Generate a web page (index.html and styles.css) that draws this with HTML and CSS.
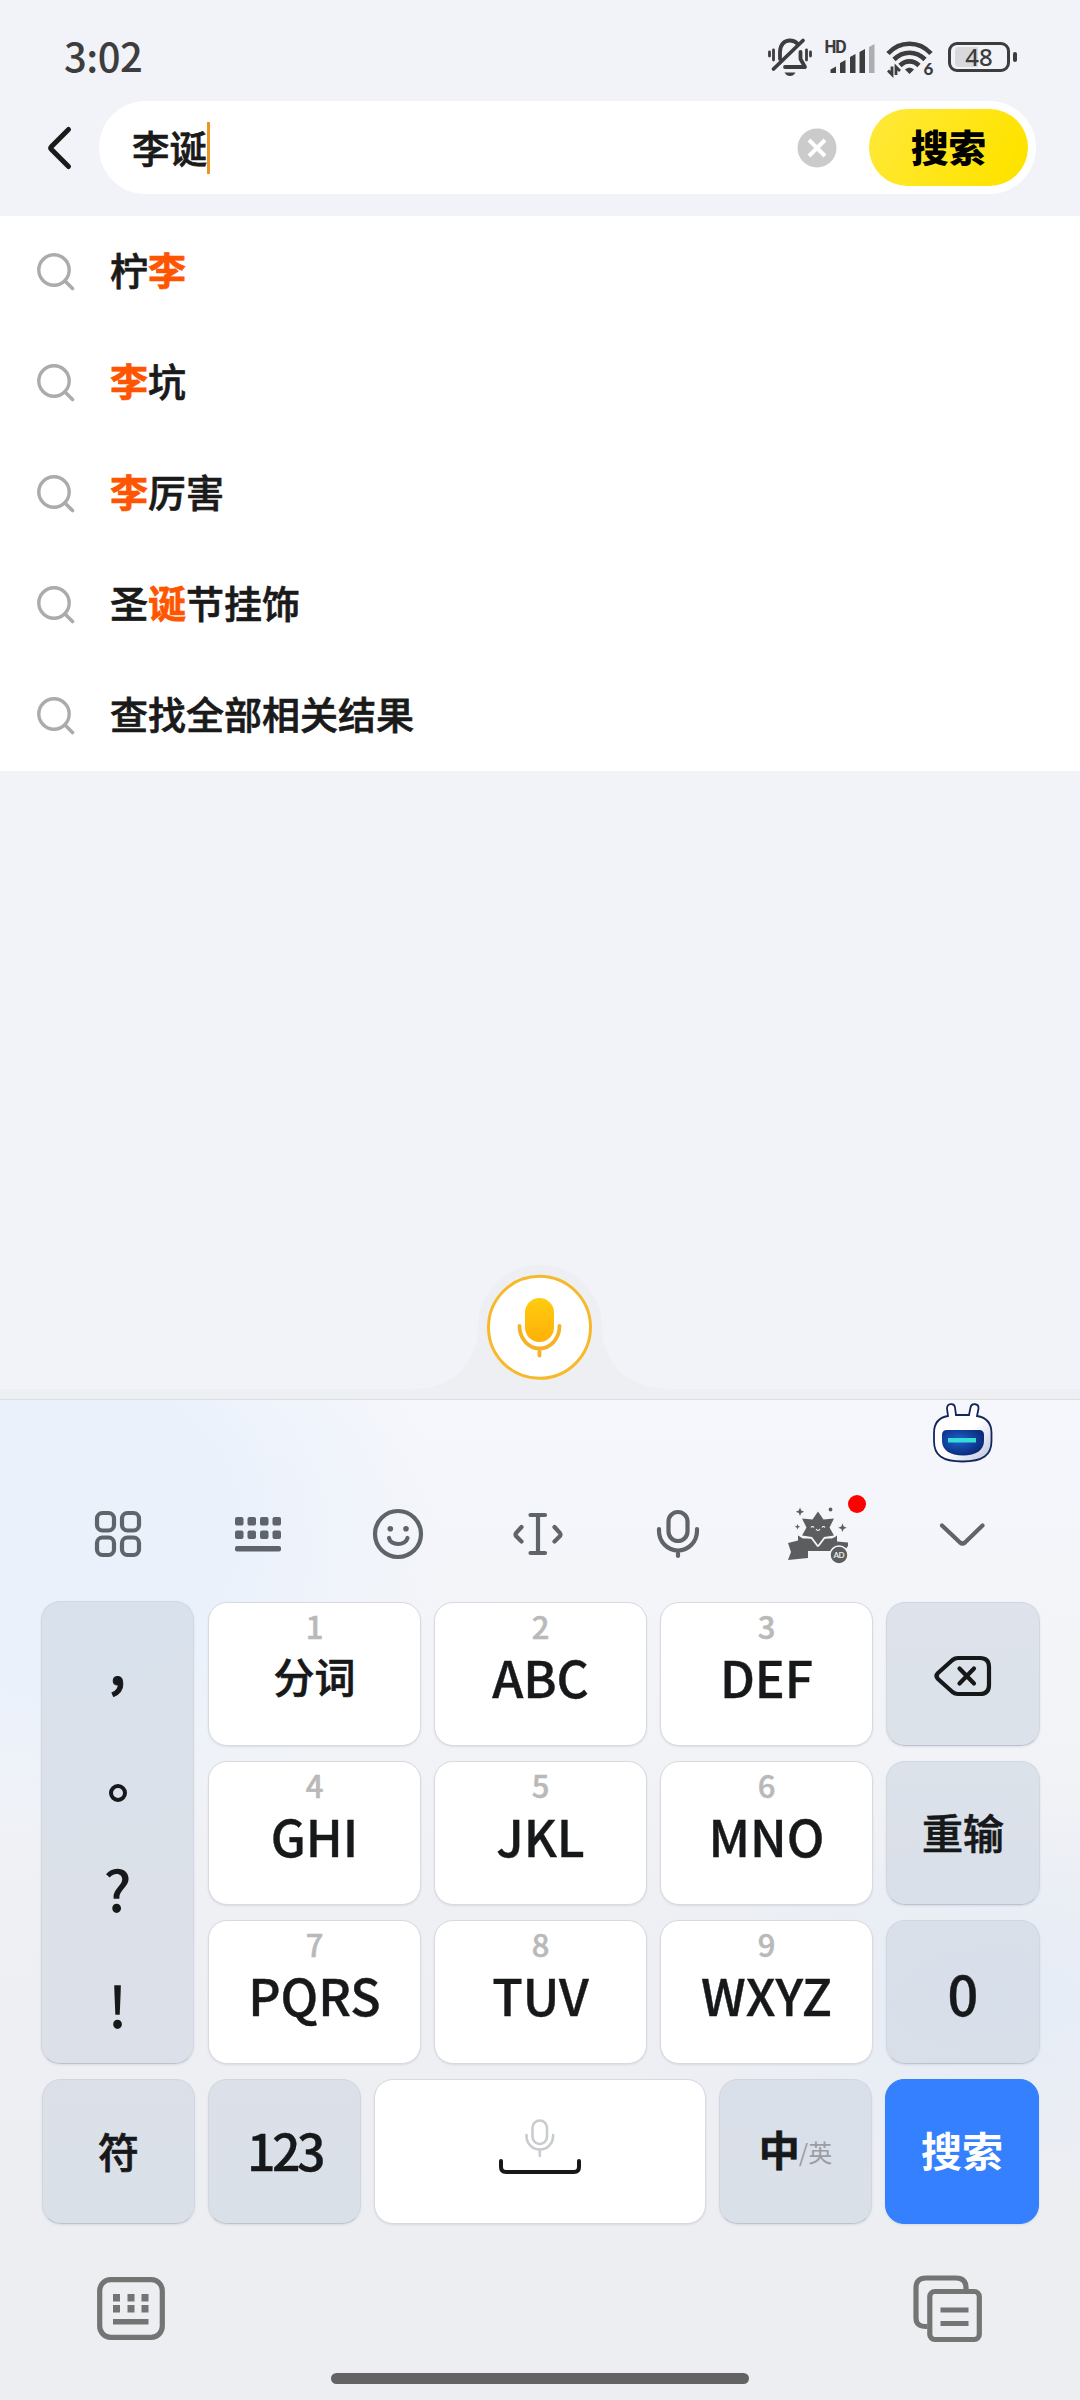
FILE: index.html
```html
<!DOCTYPE html>
<html lang="zh-CN">
<head>
<meta charset="utf-8">
<title>搜索</title>
<link rel="stylesheet" href="styles.css">
</head>
<body>
<header class="top">
  <div class="status">
    <span class="time">3:02</span>
    <div class="status-icons">
      <svg class="bell" width="44" height="40" viewBox="0 0 44 40" fill="none" stroke="#3d3d3d" stroke-width="3.8" stroke-linecap="round" stroke-linejoin="round">
        <path d="M1.5 14v4M5.5 12v10M42.500 14v4M38.500 12v10" stroke-width="2.8"/>
        <path d="M12 21V14C12 7 16 2.500 22 2.500c3.200 0 6 1.500 7.800 3.500M32.500 14v7l4.500 8H17M5.500 31 35 2.500"/>
        <path d="M16.500 34.500h11c-1.500 2.500-3 3.500-5.500 3.500s-4-1-5.500-3.500z" fill="#3d3d3d" stroke="none"/>
      </svg>
      <svg class="signal" width="52" height="36" viewBox="0 0 52 36">
        <text x="0" y="13.500" class="hd" textLength="23">HD</text>
        <g fill="#3d3d3d"><path d="M6.500 30.500l5.500-3v6.500H6.500zM16 24l5.500-3v13H16zM26 18l5.500-3v19H26zM35.500 13l5.500-3v24h-5.500z"/></g>
        <path d="M45 8l5.500-3v29H45z" fill="#acadb0"/>
      </svg>
      <svg class="wifi" width="48" height="38" viewBox="0 0 48 38" fill="none" stroke="#3d3d3d" stroke-width="4.600">
        <path d="M2 14.500c12-13 31-13 43 0M8 20.500c9-9 22-9 31 0M14 26.500c5.500-5.500 13.500-5.500 19 0"/>
        <path d="M19 30.500c3-2.500 6-2.500 9 0l-4.500 4.500z" fill="#3d3d3d" stroke="none"/>
        <path d="M6 27.500v8l-4-4M10 36v-8l4 4" stroke-width="2.800"/>
        <text x="37.500" y="35.500" class="wifi-gen">6</text>
      </svg>
      <div class="battery"><i></i><span>48</span></div>
      <b class="nub"></b>
    </div>
  </div>
  <div class="searchbar">
    <svg class="back" width="26" height="44" viewBox="0 0 26 44" fill="none" stroke="#1a1a1a" stroke-width="5" stroke-linecap="round" stroke-linejoin="round"><path d="M21.500 3.500 4.500 20.500Q3 22 4.500 23.500L21.500 40.500"/></svg>
    <div class="field">
      <span class="query">李诞</span><i class="caret"></i>
      <svg class="clear" width="40" height="40" viewBox="0 0 40 40"><circle cx="20" cy="20" r="19.500" fill="#cbcbcb"/><path d="M12 12l16 16M28 12l-16 16" stroke="#fff" stroke-width="4"/></svg>
      <button class="go">搜索</button>
    </div>
  </div>
</header>

<svg class="defs" width="0" height="0"><defs>
  <symbol id="lens" viewBox="0 0 38 38"><circle cx="17" cy="17" r="15.200" fill="none" stroke="#aaabad" stroke-width="3.400"/><path d="M28 28l7.500 7.500" stroke="#aaabad" stroke-width="3.600" stroke-linecap="round"/></symbol>
</defs></svg>
<ul class="suggest">
  <li><svg class="lens"><use href="#lens"/></svg><span>柠<em>李</em></span></li>
  <li><svg class="lens"><use href="#lens"/></svg><span><em>李</em>坑</span></li>
  <li><svg class="lens"><use href="#lens"/></svg><span><em>李</em>厉害</span></li>
  <li><svg class="lens"><use href="#lens"/></svg><span>圣<em>诞</em>节挂饰</span></li>
  <li><svg class="lens"><use href="#lens"/></svg><span>查找全部相关结果</span></li>
</ul>

<main class="blank">
  <svg width="1080" height="134" viewBox="0 0 1080 134">
    <defs><linearGradient id="gold" x1="0" y1="0" x2="0" y2="1"><stop offset="0" stop-color="#ffcc10"/><stop offset="1" stop-color="#ffb008"/></linearGradient></defs>
    <path d="M0 124H412C452 124 478 99 478 62A62 62 0 0 1 602 62C602 99 628 124 672 124H1080V134H0z" fill="#eeeff3"/>
    <circle cx="539.500" cy="62.300" r="51" fill="#fff" stroke="#f6b92b" stroke-width="3"/>
    <rect x="525" y="33" width="29" height="44" rx="14.500" fill="url(#gold)"/>
    <path d="M519.500 61a20 22.500 0 0 0 40 0M539.500 84v6.500" fill="none" stroke="#f6b224" stroke-width="3.800" stroke-linecap="round"/>
  </svg>
</main>

<section class="keyboard">
  <div class="assistant">
    <svg width="60" height="61" viewBox="0 0 60 61">
      <defs>
        <linearGradient id="shell" x1="0" y1="0" x2="1" y2="1"><stop offset=".55" stop-color="#fff"/><stop offset="1" stop-color="#b9bfdc"/></linearGradient>
        <radialGradient id="visor" cx=".4" cy=".4" r=".65"><stop offset="0" stop-color="#1c62cf"/><stop offset="1" stop-color="#0a2775"/></radialGradient>
      </defs>
      <path d="M15 13 14 5.500C14 0 21.500-.5 22 4.500L23 12H36L37.500 4.500C38.500-.5 46 .5 45.500 5.500L44 13C53 14.500 58.500 20 58.500 30V38C58.500 52 50 58.500 29.500 58.500S1 52 1 38V30C1 20 6 14.500 15 13z" fill="url(#shell)" stroke="#14265c" stroke-width="1.800"/>
      <path d="M14 27H46Q51 27 51 32V38C51 47 43 52.500 30 52.500S9 47 9 38V32Q9 27 14 27z" fill="url(#visor)"/>
      <rect x="15" y="35" width="28" height="4.500" fill="#37dcd6"/>
    </svg>
  </div>
  <nav class="tools">
    <svg viewBox="0 0 60 60" fill="none" stroke="#5f636a" stroke-width="4.200"><rect x="9" y="9" width="17" height="17.500" rx="5.500"/><rect x="34" y="9" width="17" height="17.500" rx="5.500"/><rect x="9" y="33.500" width="17" height="17.500" rx="5.500"/><rect x="34" y="33.500" width="17" height="17.500" rx="5.500"/></svg>
    <svg viewBox="0 0 60 60" fill="#5f636a"><rect x="7" y="13" width="8.500" height="8.500" rx="2"/><rect x="19.500" y="13" width="8.500" height="8.500" rx="2"/><rect x="32" y="13" width="8.500" height="8.500" rx="2"/><rect x="44.500" y="13" width="8.500" height="8.500" rx="2"/><rect x="7" y="26.500" width="8.500" height="8.500" rx="2"/><rect x="19.500" y="26.500" width="8.500" height="8.500" rx="2"/><rect x="32" y="26.500" width="8.500" height="8.500" rx="2"/><rect x="44.500" y="26.500" width="8.500" height="8.500" rx="2"/><rect x="7" y="42" width="46" height="5.500" rx="2"/></svg>
    <svg viewBox="0 0 60 60" fill="none" stroke="#5f636a" stroke-width="4.200"><circle cx="30" cy="30" r="23"/><path d="M21 34c1.500 8 16.500 8 18.500 0" stroke-linecap="round"/><circle cx="22.300" cy="24.800" r="2.800" fill="#5f636a" stroke="none"/><circle cx="38" cy="24.800" r="2.800" fill="#5f636a" stroke="none"/></svg>
    <svg viewBox="0 0 60 60" fill="none" stroke="#5f636a" stroke-width="4.200" stroke-linecap="round" stroke-linejoin="round"><path d="M22.500 11H37M22.500 49H37M30 11v38M13.500 23 8 29.200Q7 30.500 8 32L13.500 37.500M46.500 23 52 29.200Q53 30.500 52 32L46.500 37.500"/></svg>
    <svg viewBox="0 0 60 60" fill="none" stroke="#5f636a" stroke-width="4.200"><rect x="20.500" y="8" width="19" height="29" rx="9.500"/><path d="M11 25v2a19 19.500 0 0 0 38 0v-2M30 46.500V52" stroke-linecap="round"/></svg>
    <div class="skin">
      <svg viewBox="0 0 60 60" fill="#5b5d5f">
        <path d="M0 39 10 36.500V31.500L15 34.500H44L49 31.500V37.500L60 38.500V42L57 46 60 50 42 47H20V54L0 56 3 48z"/>
        <path d="M30 7.500 35.500 15.500 46 14.500 41.500 23.500 46 31.500 36 33 30 41 24 33 14 31.500 18.500 23.500 14 14.500 24.500 15.500z" stroke="#f4f6fa" stroke-width="3.600" paint-order="stroke" stroke-linejoin="round"/>
        <path d="M12 3.500l1.200 3 3 1.200-3 1.200-1.200 3-1.200-3-3-1.200 3-1.200zM54.500 19.500l1.200 3 3 1.200-3 1.200-1.200 3-1.200-3-3-1.200 3-1.200zM9.500 20l.8 2 2 .8-2 .8-.8 2-.8-2-2-.8 2-.8z"/>
        <circle cx="42.500" cy="5.500" r="1.900"/>
        <path d="M23 23.500q1.500-2 3 0M34 23.500q1.500-2 3 0M28 25q2 3 4 0" fill="none" stroke="#fff" stroke-width="1.200"/>
        <circle cx="51" cy="51" r="9" stroke="#f4f6fa" stroke-width="1.500"/>
        <text x="45.500" y="54" class="ad" textLength="11">AD</text>
      </svg>
      <i class="dot"></i>
    </div>
    <svg class="fold" viewBox="0 0 60 60" fill="none" stroke="#5f636a" stroke-width="4.200" stroke-linecap="round" stroke-linejoin="round"><path d="M10 21.500 28 38.500Q30.500 40.500 33 38.500L50.500 21.500"/></svg>
  </nav>
  <div class="keys">
    <div class="key soft punct"><span class="p1">,</span><span class="p2"></span><span class="p3">?</span><span class="p4">!</span></div>
    <div class="key"><small>1</small><b class="cn">分词</b></div>
    <div class="key"><small>2</small><b>ABC</b></div>
    <div class="key"><small>3</small><b>DEF</b></div>
    <div class="key soft mid"><svg class="erase" width="58" height="42" viewBox="0 0 58 42" fill="none" stroke="#16181a" stroke-width="4.200" stroke-linecap="round" stroke-linejoin="round"><path d="M24 3H46Q55 3 55 12V30Q55 39 46 39H24Q21 39 18.500 37L4 24Q1 21 4 18L18.500 5Q21 3 24 3zM25.500 13.500l14.500 15M40 13.500l-14.500 15"/></svg></div>
    <div class="key"><small>4</small><b>GHI</b></div>
    <div class="key"><small>5</small><b>JKL</b></div>
    <div class="key"><small>6</small><b>MNO</b></div>
    <div class="key soft mid"><b class="cn">重输</b></div>
    <div class="key"><small>7</small><b>PQRS</b></div>
    <div class="key"><small>8</small><b>TUV</b></div>
    <div class="key"><small>9</small><b>WXYZ</b></div>
    <div class="key soft mid"><b class="zero">0</b></div>
  </div>
  <div class="lastrow">
    <div class="key soft mid"><b class="cn">符</b></div>
    <div class="key soft mid"><b class="num">123</b></div>
    <div class="key mid space"><svg width="84" height="58" viewBox="0 0 84 58" fill="none" stroke-linecap="round"><rect x="34.500" y="2.500" width="14.500" height="23.500" rx="7.200" stroke="#c9cccf" stroke-width="2.600"/><path d="M28.500 17v1a13.300 13.500 0 0 0 26.600 0v-1M41.800 32v6" stroke="#c9cccf" stroke-width="2.600"/><path d="M3 43v6q0 5 5 5H76q5 0 5-5v-6" stroke="#16181a" stroke-width="4"/></svg></div>
    <div class="key soft mid lang"><b class="cn">中</b><span>/英</span></div>
    <div class="key mid enter"><b class="cn">搜索</b></div>
  </div>
</section>
<footer class="navbar">
  <div class="sysicons">
    <svg width="68" height="63" viewBox="0 0 68 63" fill="#747474"><rect x="2.700" y="2.700" width="62.600" height="57.600" rx="11" fill="none" stroke="#747474" stroke-width="5.200"/><path d="M16 17h7v7.500h-7zM30.500 17h7v7.500h-7zM44.500 17h7v7.500h-7zM16 28h7v7.500h-7zM30.500 28h7v7.500h-7zM44.500 28h7v7.500h-7zM16 42h35.500v5.500H16z"/></svg>
    <svg width="70" height="68" viewBox="0 0 70 68" fill="none" stroke="#747474" stroke-width="5.200"><path d="M14.500 51.500H13Q3 51.500 3 43V13Q3 3 13 3H43Q53 3 53 13V15"/><rect x="16.800" y="16.500" width="49.500" height="48" rx="5"/><path d="M27.500 35H55.500M27.500 48.500H55.500"/></svg>
  </div>
  <div class="home"></div>
</footer>
</body>
</html>
```
FILE: styles.css
```css
* { box-sizing: border-box; }
body {
  margin: 0; width: 1080px; height: 2400px; overflow: hidden;
  display: flex; flex-direction: column;
  background: #f2f3f8; color: #1a1a1a;
  font-family: "Noto Sans CJK SC", sans-serif;
}
svg { display: block; flex: none; overflow: visible; }
.defs { position: absolute; }

.top { height: 216px; flex: none; }
.status { height: 101px; display: flex; justify-content: space-between; padding: 32px 63px 0 64px; }
.time { font: 500 40px/46px "Noto Sans CJK SC", sans-serif; color: #3d3d3d; letter-spacing: -.5px; }
.status-icons { display: flex; padding-top: 3px; }
.bell { margin: 3px 12px 0 0; }
.signal { margin: 4px 10px 0 0; }
.wifi { margin: 4px 14px 0 0; }
.hd { font: 700 17px "Noto Sans CJK SC", sans-serif; fill: #3d3d3d; }
.wifi-gen { font: 900 17px Lato, sans-serif; fill: #3d3d3d; stroke: none; }
.battery { position: relative; width: 62px; height: 30px; margin-top: 7px; border: 3px solid #3d3d3d; border-radius: 9px; text-align: center; font: 500 24px/24px "Noto Sans", sans-serif; color: #3d3d3d; }
.battery i { position: absolute; left: 4px; top: 2px; width: 23px; height: 20px; background: #d8d9dd; border-radius: 4px 0 0 4px; }
.battery span { position: relative; }
.nub { width: 4px; height: 10px; margin: 17px 0 0 3px; border-radius: 2px; background: #3d3d3d; }

.searchbar { display: flex; align-items: center; height: 93px; padding-left: 47px; }
.back { margin-right: 26px; }
.field { display: flex; align-items: center; width: 937px; height: 93px; padding: 0 8px 0 33px; background: #fff; border-radius: 47px; }
.query { font: 500 37.5px/52px "Noto Sans CJK SC", sans-serif; width: 75px; padding-bottom: 2px; -webkit-text-stroke: .7px; }
.caret { width: 3px; height: 52px; background: #ee9420; }
.clear { margin-left: auto; margin-right: 32px; }
.go { width: 159px; height: 77px; border: 0; border-radius: 39px; padding: 0 0 4px; background: linear-gradient(120deg, #ffe93b, #ffe300 85%); font: 900 37.5px/50px "Noto Sans CJK SC", sans-serif; color: #000; }

.suggest { list-style: none; margin: 0; padding: 0; flex: none; background: #fff; }
.suggest li { display: flex; align-items: center; height: 111px; padding-left: 37px; gap: 35px; font: 500 38px/56px "Noto Sans CJK SC", sans-serif; -webkit-text-stroke: .7px; }
.suggest span { padding-bottom: 5px; }
.suggest em { font-style: normal; font-weight: 700; color: #ff5500; }
.lens { width: 38px; height: 38px; }

.blank { flex: 1; display: flex; align-items: flex-end; }

.keyboard {
  height: 838px; flex: none; border-top: 1px solid #dcdee2;
  background:
    radial-gradient(ellipse 400px 330px at 40px 120px, #eaf1fb 0%, #eaf1fb 45%, rgba(234,241,251,0) 100%),
    radial-gradient(ellipse 400px 200px at 1000px 600px, #e5ecf6 0%, rgba(229,236,246,0) 100%),
    linear-gradient(#f6f7fc, #f2f4f8 35%, #eff0f4 60%, #edeef2);
}
.assistant { height: 68px; padding: 3px 87px 0 0; display: flex; justify-content: flex-end; }
.tools { height: 133px; padding: 36px 88px 0; display: flex; gap: 80px; }
.tools svg { width: 60px; height: 60px; }
.tools .fold { margin-left: 4px; }
.skin { position: relative; width: 60px; }
.dot { position: absolute; left: 60px; top: -9px; width: 18px; height: 18px; border-radius: 50%; background: #f00; }
.ad { font: 700 8px Lato, sans-serif; fill: #e8e8e8; }

.keys, .lastrow { display: grid; }
.keys { gap: 15px 13px; margin: 1px 0 0 41px; grid-template-columns: 154px 213px 213px 213px 154px; grid-template-rows: repeat(3, 144px); }
.lastrow { column-gap: 13px; margin: 15px 0 0 42px; grid-template-columns: 153px 153px 332px 153px 154px; grid-template-rows: 145px; }
.key { display: flex; flex-direction: column; align-items: center; background: #fff; border: 1px solid #d8dae0; border-radius: 19px; box-shadow: 0 1px 2px rgba(90,100,130,.14); color: #16181a; }
.key b { font: 500 50px/60px "Noto Sans CJK SC", sans-serif; -webkit-text-stroke: .4px; }
.key small { font: 500 31px/30px "Noto Sans CJK SC", sans-serif; color: #b9b9b9; margin: 8px 0 5px; -webkit-text-stroke: .5px; }
.key .cn { font: 500 41px/60px "Noto Sans CJK SC", sans-serif; -webkit-text-stroke: .7px; }
.key small + .cn { margin-top: -1px; }
.soft { background: rgba(207,214,226,.62); border-color: #d1d6df; border-bottom-color: #bcc3d0; }
.mid { justify-content: center; }
.mid b { margin-top: -4px; }
.mid .erase { margin-top: 4px; }
.key .num { letter-spacing: -3.5px; margin-top: -5px; }
.key .zero { font-size: 54px; margin-top: 1px; }
.punct { grid-row: span 3; font: 500 57px/60px "Noto Sans CJK SC", sans-serif; margin: -1px 1px 0 0; }
.p1 { margin-top: 28px; -webkit-text-stroke: 1px; }
.p2 { width: 18px; height: 18px; margin-top: 94px; border: 4px solid #16181a; border-radius: 50%; }
.p3 { margin-top: 55px; }
.p4 { margin-top: 56px; }
.space svg { margin-top: -9px; }
.lang { flex-direction: row; align-items: center; }
.key.lang .cn { font-weight: 700; margin-top: -8px; }
.lang span { font: 400 24px/30px "Noto Sans CJK SC", sans-serif; color: #9a9da5; margin-left: -1px; }
.enter { background: #3480ff; border-color: #3480ff; }
.key.enter b { color: #fff; font-weight: 700; -webkit-text-stroke: 0; margin-top: -5px; }

.navbar { height: 163px; flex: none; background: #edeef2; }
.sysicons { display: flex; justify-content: space-between; align-items: center; padding: 38px 97px 0; height: 105px; }
.home { width: 418px; height: 11px; margin: 31px 0 0 331px; border-radius: 6px; background: #636363; }
```
